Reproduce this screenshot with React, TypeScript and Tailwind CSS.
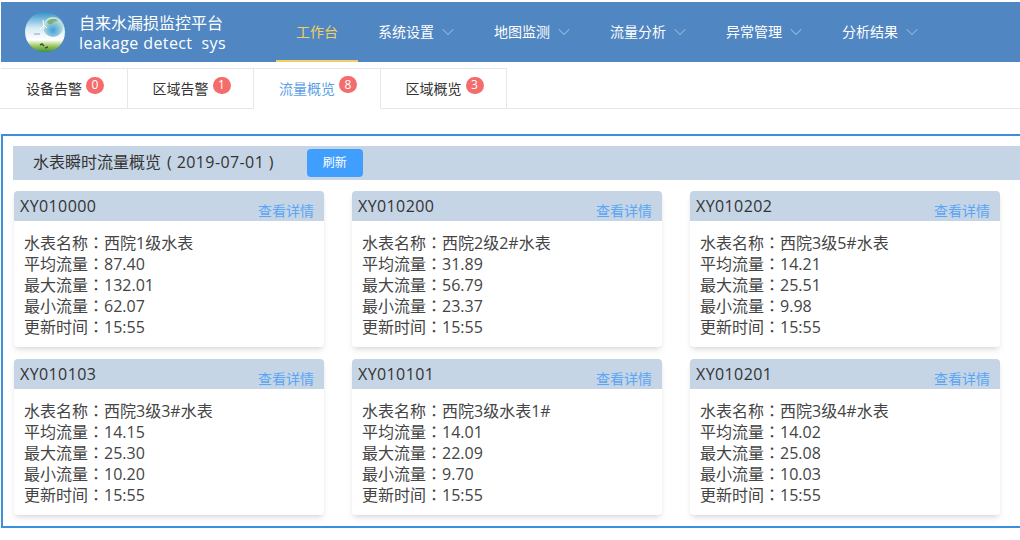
import { ChevronDown } from "lucide-react";

const font = { fontFamily: '"Open Sans", "Noto Sans CJK SC", sans-serif' };

const navItems = ["系统设置", "地图监测", "流量分析", "异常管理", "分析结果"];

const tabs = [
  { name: "设备告警", count: 0 },
  { name: "区域告警", count: 1 },
  { name: "流量概览", count: 8, active: true },
  { name: "区域概览", count: 3 },
];

const meters = [
  { id: "XY010000", name: "西院1级水表", avg: "87.40", max: "132.01", min: "62.07" },
  { id: "XY010200", name: "西院2级2#水表", avg: "31.89", max: "56.79", min: "23.37" },
  { id: "XY010202", name: "西院3级5#水表", avg: "14.21", max: "25.51", min: "9.98" },
  { id: "XY010103", name: "西院3级3#水表", avg: "14.15", max: "25.30", min: "10.20" },
  { id: "XY010101", name: "西院3级水表1#", avg: "14.01", max: "22.09", min: "9.70" },
  { id: "XY010201", name: "西院3级4#水表", avg: "14.02", max: "25.08", min: "10.03" },
];

function Logo() {
  return (
    <svg viewBox="0 0 40 40" className="h-10 w-10 shrink-0">
      <defs>
        <linearGradient id="sky" x1="0" y1="0" x2="0" y2="1">
          <stop offset="0" stopColor="#2f93c9" />
          <stop offset="0.4" stopColor="#d5ebf5" />
          <stop offset="0.7" stopColor="#ffffff" />
          <stop offset="0.85" stopColor="#9cc85a" />
          <stop offset="1" stopColor="#3f8f3a" />
        </linearGradient>
        <radialGradient id="globe" cx="0.5" cy="0.65" r="0.6">
          <stop offset="0" stopColor="#3f9fdc" />
          <stop offset="1" stopColor="#cfe6d8" />
        </radialGradient>
      </defs>
      <circle cx="20" cy="20" r="20" fill="url(#sky)" />
      <circle cx="28" cy="15" r="10" fill="url(#globe)" />
      <path d="M22 10c3-4 9-4 11-1-3 0-5 1-6 3-2 1-4 0-5-2z" fill="#7fae7a" />
      <path d="M18 8l1 9M15 17l4-4 3 3" stroke="#ffffff" strokeWidth="1" fill="none" />
      <path d="M9 22h6" stroke="#8aa4b8" strokeWidth="1" />
      <path d="M15 33l2-1 2 2M20 36l3-1" stroke="#35572e" strokeWidth="1.5" fill="none" />
    </svg>
  );
}

function MeterCard({ meter }: { meter: (typeof meters)[number] }) {
  const rows = [
    ["水表名称", meter.name],
    ["平均流量", meter.avg],
    ["最大流量", meter.max],
    ["最小流量", meter.min],
    ["更新时间", "15:55"],
  ];
  return (
    <div className="overflow-hidden rounded-sm bg-white shadow-md">
      <div className="flex h-[30px] items-end justify-between bg-[#c5d5e5] pr-2.5 pl-1.5">
        <span className="self-center text-base tracking-wide text-[#333]">{meter.id}</span>
        <span className="text-sm leading-5 text-[#5aa5f5]">查看详情</span>
      </div>
      <div className="flex flex-col gap-px pt-3 pb-2.5 pl-2.5 text-base leading-5 text-[#444]">
        {rows.map(([label, value]) => (
          <div key={label}>
            {/* zh-Hant picks the colon that sits centred in its box */}
            {label}
            <span lang="zh-Hant">：</span>
            {value}
          </div>
        ))}
      </div>
    </div>
  );
}

export default function App() {
  return (
    <div className="h-screen w-full overflow-hidden bg-white pt-0.5" style={font}>
      <header className="ml-px flex h-[60px] bg-[#5086c1] pl-6 text-white">
        <div className="flex w-[251px] items-center">
          <Logo />
          <div className="ml-3.5 pt-0.5 text-base leading-5 whitespace-pre">
            <div>自来水漏损监控平台</div>
            <div className="tracking-wide">leakage detect  sys</div>
          </div>
        </div>
        <nav className="flex text-sm">
          <div className="flex items-center border-b-2 border-[#f0cf65] px-5 pt-0.5 text-[#f0cf65]">工作台</div>
          {navItems.map((item) => (
            <div key={item} className="flex items-center px-5">
              {item}
              <ChevronDown className="-mr-1 ml-1 h-5 w-5 text-[#9dbce0]" strokeWidth={1.25} />
            </div>
          ))}
        </nav>
      </header>

      <div className="mt-1.5 flex h-[41px] border-b border-gray-200 pl-px">
        {tabs.map((tab) => (
          <div
            key={tab.name}
            className={`flex h-[41px] w-[126.5px] items-center border-t border-r border-gray-200 pl-6.25 text-sm ${
              tab.active ? "border-b border-b-white text-[#5a9fe6]" : "text-[#333]"
            }`}
          >
            {tab.name}
            <span className="mb-2 ml-1 flex h-[17px] w-[18px] items-center justify-center rounded-full bg-[#f56c6c] text-xs text-white">
              {tab.count}
            </span>
          </div>
        ))}
      </div>

      <section className="mt-[25px] ml-px border-y-2 border-l-2 border-[#3a90dc] pt-2.5 pb-2.75 pl-2.5">
        <div className="flex h-[34px] items-center bg-[#c5d5e5] pl-5 text-base text-[#333]">
          <span className="mb-0.5 whitespace-pre">
            水表瞬时流量概览<span className="ml-1.5 tracking-wide">( 2019-07-01 )</span>
          </span>
          <button className="ml-8.25 h-7 w-14 rounded bg-[#409eff] text-xs text-white">刷新</button>
        </div>
        <div className="mt-2.75 mr-5 ml-px grid grid-cols-3 gap-x-7 gap-y-3">
          {meters.map((meter) => (
            <MeterCard key={meter.id} meter={meter} />
          ))}
        </div>
      </section>
    </div>
  );
}
